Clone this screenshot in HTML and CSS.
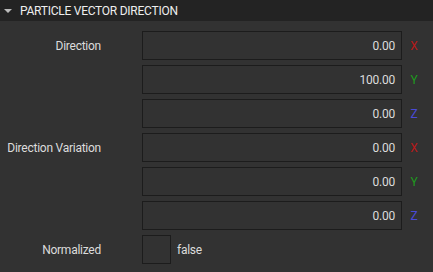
FILE: index.html
```html
<!DOCTYPE html>
<html lang="en">
<head>
    <meta charset="UTF-8">
    <title>Particle Vector Direction</title>
    <link rel="stylesheet" href="styles.css">
</head>
<body>
    <div class="panel">
        <div class="panel-header">
            <span class="caret"></span>
            <span class="panel-title">PARTICLE VECTOR DIRECTION</span>
        </div>
        <div class="props">
            <div class="label">Direction</div>
            <div class="field">0.00</div>
            <div class="axis axis-x">X</div>

            <div class="label"></div>
            <div class="field">100.00</div>
            <div class="axis axis-y">Y</div>

            <div class="label"></div>
            <div class="field">0.00</div>
            <div class="axis axis-z">Z</div>

            <div class="label">Direction Variation</div>
            <div class="field">0.00</div>
            <div class="axis axis-x">X</div>

            <div class="label"></div>
            <div class="field">0.00</div>
            <div class="axis axis-y">Y</div>

            <div class="label"></div>
            <div class="field">0.00</div>
            <div class="axis axis-z">Z</div>

            <div class="label">Normalized</div>
            <div class="check-row">
                <div class="checkbox"></div>
                <span class="check-text">false</span>
            </div>
            <div></div>
        </div>
    </div>
</body>
</html>
```

FILE: styles.css
```css
html, body {
    margin: 0;
    padding: 0;
    width: 100%;
    height: 100%;
    overflow: hidden;
    background-color: #323232;
    font-family: Roboto, sans-serif;
    font-size: 12px;
    letter-spacing: -0.25px;
    color: #dcdcdc;
}

.panel-header {
    height: 21px;
    display: flex;
    align-items: center;
    background-color: #232323;
    color: #eee;
}

.caret {
    width: 0;
    height: 0;
    margin: 0 8px 0 4px;
    border-left: 4px solid transparent;
    border-right: 4px solid transparent;
    border-top: 4px solid #bbb;
}

.panel-title {
    font-size: 12px;
}

.props {
    display: grid;
    grid-template-columns: 142px 260px 1fr;
    grid-auto-rows: 29px;
    row-gap: 5px;
    padding-top: 10px;
}

.label {
    display: flex;
    align-items: center;
    justify-content: flex-end;
    padding-right: 41px;
    white-space: nowrap;
}

.field {
    box-sizing: border-box;
    border: 1px solid #1c1c1c;
    display: flex;
    align-items: center;
    justify-content: flex-end;
    padding-right: 6px;
}

.axis {
    display: flex;
    align-items: center;
    justify-content: center;
    width: 24px;
    font-size: 12px;
}

.axis-x { color: #b81a1a; }
.axis-y { color: #1e9a1e; }
.axis-z { color: #4a4ad6; }

.check-row {
    display: flex;
    align-items: center;
    gap: 6px;
}

.checkbox {
    box-sizing: border-box;
    width: 29px;
    height: 29px;
    border: 1px solid #1c1c1c;
}
```
